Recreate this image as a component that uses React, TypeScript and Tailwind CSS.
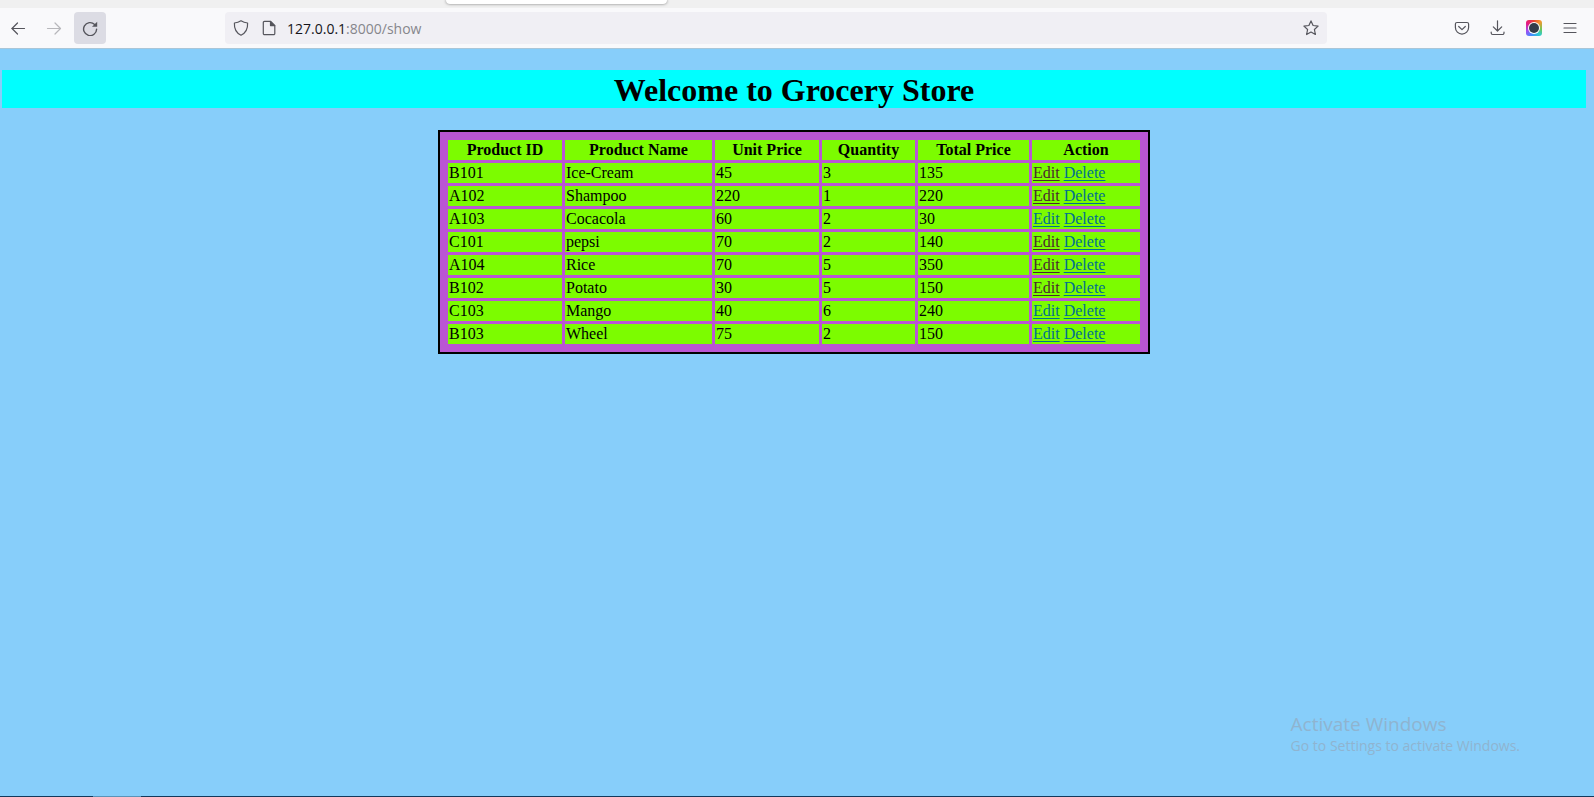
import type { ReactNode } from 'react';

type Product = {
  id: string;
  name: string;
  unit: number;
  qty: number;
  total: number;
  visited: boolean;
};

const products: Product[] = [
  { id: 'B101', name: 'Ice-Cream', unit: 45, qty: 3, total: 135, visited: true },
  { id: 'A102', name: 'Shampoo', unit: 220, qty: 1, total: 220, visited: true },
  { id: 'A103', name: 'Cocacola', unit: 60, qty: 2, total: 30, visited: false },
  { id: 'C101', name: 'pepsi', unit: 70, qty: 2, total: 140, visited: true },
  { id: 'A104', name: 'Rice', unit: 70, qty: 5, total: 350, visited: true },
  { id: 'B102', name: 'Potato', unit: 30, qty: 5, total: 150, visited: true },
  { id: 'C103', name: 'Mango', unit: 40, qty: 6, total: 240, visited: false },
  { id: 'B103', name: 'Wheel', unit: 75, qty: 2, total: 150, visited: false },
];

const columns = [
  { label: 'Product ID', width: 'w-[114px]' },
  { label: 'Product Name', width: 'w-[147px]' },
  { label: 'Unit Price', width: 'w-[104px]' },
  { label: 'Quantity', width: 'w-[93px]' },
  { label: 'Total Price', width: 'w-[111px]' },
  { label: 'Action', width: 'w-[108px]' },
];

function Icon({ children, className = '' }: { children: ReactNode; className?: string }) {
  return (
    <svg
      viewBox="0 0 16 16"
      className={`size-4 shrink-0 ${className}`}
      fill="none"
      stroke="currentColor"
      strokeWidth="1.2"
      strokeLinecap="round"
      strokeLinejoin="round"
      aria-hidden="true"
    >
      {children}
    </svg>
  );
}

function ToolButton({ label, className = '', children }: { label: string; className?: string; children: ReactNode }) {
  return (
    <button
      type="button"
      aria-label={label}
      className={`flex size-8 shrink-0 items-center justify-center rounded text-[#55555c] ${className}`}
    >
      {children}
    </button>
  );
}

function BrowserBar() {
  return (
    <header className="font-['Open_Sans','Noto_Sans',sans-serif]">
      <div className="h-2 overflow-hidden bg-[#f0f0f0] pl-[446px]">
        <div className="h-1 w-[221px] rounded-b bg-white shadow-[0_0_3px_rgba(0,0,0,0.5)]" />
      </div>
      <div className="flex h-[41px] items-center border-b border-[#a9c6d8] bg-[#f9f9fb] pr-2 pl-[2px]">
        <nav className="flex gap-1">
          <ToolButton label="Back">
            <Icon>
              <path d="M14.500 8.500H1.700M7.500 3 2 8.500 7.500 14" />
            </Icon>
          </ToolButton>
          <ToolButton label="Forward" className="opacity-40">
            <Icon>
              <path d="M1.500 8.500h12.800M9 3l5.500 5.500L9 14" />
            </Icon>
          </ToolButton>
          <ToolButton label="Reload" className="bg-[#dcdce4]">
            <Icon>
              <path d="M14.600 9.200A6.500 6.500 0 1 1 12.600 4.400" strokeWidth="1.4" />
              <path d="M15.200 1.800v5H10z" fill="currentColor" stroke="none" />
            </Icon>
          </ToolButton>
        </nav>
        <div className="ml-[119px] flex h-8 min-w-0 flex-1 items-center rounded bg-[#f0eff4] pr-2 pl-2 text-[#55555c]">
          <Icon>
            <path d="M8 .8c2 1.300 4.200 2 6.600 2.200.3 5.500-1.500 9.800-6.600 12.200C2.900 12.800 1.100 8.500 1.400 3 3.800 2.800 6 2.100 8 .8z" />
          </Icon>
          <Icon className="ml-3">
            <path d="M3.500 1.300h6L13.800 5.600v7.900a1.200 1.200 0 0 1-1.200 1.200H3.500a1.200 1.200 0 0 1-1.200-1.200v-11a1.200 1.200 0 0 1 1.200-1.200z" />
            <path d="M9.500 1.300v4.300h4.300z" fill="currentColor" />
          </Icon>
          <p className="ml-[10px] flex-1 truncate pt-0.5 text-sm text-[#86868c]">
            <span className="text-[#15141a]">127.0.0.1</span>:8000/show
          </p>
          <button type="button" aria-label="Bookmark this page">
            <Icon>
              <path d="m8 .9 2.100 4.600 5 .6-3.700 3.400 1 5L8 12l-4.400 2.500 1-5L.9 6.100l5-.6z" />
            </Icon>
          </button>
        </div>
        <div className="ml-[119px] flex gap-1">
          <ToolButton label="Save to Pocket">
            <Icon>
              <path d="M3 2.500h10a1.600 1.600 0 0 1 1.600 1.600V7.500a6.600 6.600 0 0 1-13.200 0V4.100A1.600 1.600 0 0 1 3 2.500z" />
              <path d="M4.700 6.500 8 9.600l3.300-3.100" />
            </Icon>
          </ToolButton>
          <ToolButton label="Downloads">
            <Icon>
              <path d="M7.500.8v10M3.300 6.800l4.200 4.200 4.200-4.200M1.200 12v1a1.500 1.500 0 0 0 1.500 1.500h9.800A1.500 1.500 0 0 0 14 13v-1" />
            </Icon>
          </ToolButton>
          <ToolButton label="Screenshot extension">
            <span className="flex size-4 items-center justify-center rounded-[3px] bg-[conic-gradient(#e8452e,#f5962e_45deg,#6cc95a_100deg,#2ccbd0_140deg,#3f8dff_200deg,#a44af0_250deg,#e6197f_305deg,#e8452e)]">
              <span className="flex size-3 items-center justify-center rounded-full bg-white">
                <span className="size-2.5 rounded-full bg-[#333c4a]" />
              </span>
            </span>
          </ToolButton>
          <ToolButton label="Open menu">
            <Icon>
              <path d="M2 3.500h12M2 8h12M2 12.500h12" />
            </Icon>
          </ToolButton>
        </div>
      </div>
    </header>
  );
}

function ProductTable() {
  return (
    <table className="mx-auto mt-[22px] w-[712px] max-w-full table-fixed border-separate border-spacing-[3px] border-2 border-black bg-[#ba55d3] p-[5px] text-base leading-[18px]">
      <thead>
        <tr>
          {columns.map((c) => (
            <th key={c.label} scope="col" className={`bg-[#7cfc00] p-px font-bold ${c.width}`}>
              {c.label}
            </th>
          ))}
        </tr>
      </thead>
      <tbody>
        {products.map((p) => (
          <tr key={p.id}>
            {[p.id, p.name, p.unit, p.qty, p.total].map((value, i) => (
              <td key={i} className="bg-[#7cfc00] p-px">
                {value}
              </td>
            ))}
            <td className="bg-[#7cfc00] p-px">
              <a href="#edit" className={`underline underline-offset-2 ${p.visited ? 'text-[#4a2a30]' : 'text-[#007090]'}`}>
                Edit
              </a>{' '}
              <a href="#delete" className="text-[#007090] underline underline-offset-2">
                Delete
              </a>
            </td>
          </tr>
        ))}
      </tbody>
    </table>
  );
}

export default function App() {
  return (
    <div className="flex min-h-screen flex-col bg-[#87cefa]">
      <BrowserBar />
      <main className="flex-1 pt-[21px] pr-2 pl-[2px] font-['Liberation_Serif',serif] text-black">
        <h1 className="bg-[#00ffff] pt-0.5 text-center text-[32px] leading-9 font-bold">Welcome to Grocery Store</h1>
        <ProductTable />
      </main>
      <aside className="mb-10 self-end pr-[70px] font-['Open_Sans','Noto_Sans',sans-serif] text-[#8fb4d0]">
        <p className="text-[19px] leading-6">Activate Windows</p>
        <p className="pr-1 text-sm leading-5">Go to Settings to activate Windows.</p>
      </aside>
      <div className="h-px bg-[#12395c] pl-[93px]">
        <div className="h-px w-12 bg-[#5a93b8]" />
      </div>
    </div>
  );
}
